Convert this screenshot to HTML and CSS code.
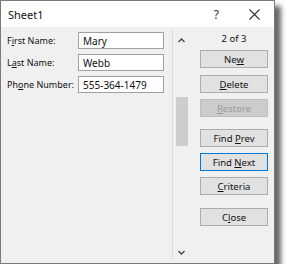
FILE: index.html
```html
<!DOCTYPE html>
<html lang="en">
<head>
  <meta charset="UTF-8" />
  <title>Sheet1</title>
  <link rel="stylesheet" href="styles.css">
</head>
<body>
  <div class="dialog">
    <div class="titlebar">
      <span class="title">Sheet1</span>
      <span class="help">?</span>
      <span class="close-x">
        <svg width="11" height="11" viewBox="0 0 11 11"><path d="M0.5 0.5 L10.5 10.5 M10.5 0.5 L0.5 10.5" stroke="#333" stroke-width="1.1" fill="none"/></svg>
      </span>
    </div>

    <div class="body">
      <div class="fields">
        <div class="row">
          <label>F<u>i</u>rst Name:</label>
          <input type="text" value="Mary" />
        </div>
        <div class="row">
          <label>L<u>a</u>st Name:</label>
          <input type="text" value="Webb" />
        </div>
        <div class="row">
          <label>Ph<u>o</u>ne Number:</label>
          <input type="text" value="555-364-1479" />
        </div>
      </div>

      <div class="scroll">
        <svg class="arrow" width="7" height="5" viewBox="0 0 7 5"><path d="M0.5 4 L3.5 1 L6.5 4" stroke="#444" stroke-width="1.3" fill="none"/></svg>
        <div class="track">
          <div class="thumb"></div>
        </div>
        <svg class="arrow" width="7" height="5" viewBox="0 0 7 5"><path d="M0.5 1 L3.5 4 L6.5 1" stroke="#444" stroke-width="1.3" fill="none"/></svg>
      </div>

      <div class="actions">
        <div class="count">2 of 3</div>
        <button class="first">Ne<u>w</u></button>
        <button><u>D</u>elete</button>
        <button disabled><u>R</u>estore</button>
        <button class="gap">Find <u>P</u>rev</button>
        <button class="focus">Find <u>N</u>ext</button>
        <button><u>C</u>riteria</button>
        <button class="gap last">C<u>l</u>ose</button>
      </div>
    </div>
  </div>
</body>
</html>
```

FILE: styles.css
```css
* {
  box-sizing: border-box;
  margin: 0;
  padding: 0;
}

body {
  background: #fff;
  font-family: 'Noto Sans', sans-serif;
  font-size: 9.5px;
  color: #111;
}

.dialog {
  width: 275px;
  height: 264px;
  background: #f0f0f0;
  border: 1px solid #7a7a7a;
  box-shadow: 6px 6px 5px rgba(0, 0, 0, 0.6);
  display: flex;
  flex-direction: column;
}

.titlebar {
  height: 26px;
  background: #fff;
  display: flex;
  align-items: center;
  padding-left: 7px;
  flex-shrink: 0;
}

.title {
  font-size: 11px;
  flex: 1;
}

.help {
  font-size: 12px;
  color: #333;
  margin-right: 30px;
}

.close-x {
  display: flex;
  margin-right: 14px;
}

.body {
  flex: 1;
  display: flex;
  padding-bottom: 4px;
}

.fields {
  width: 171px;
  padding: 5px 0 0 6px;
}

.row {
  display: flex;
  align-items: center;
  height: 17px;
  margin-bottom: 5px;
}

.row label {
  width: 71px;
  font-size: 9px;
  white-space: nowrap;
}

.row input {
  width: 86px;
  height: 17px;
  border: 1px solid #a0a0a0;
  background: #fff;
  font-family: inherit;
  font-size: 10px;
  padding: 0 4px;
  color: #111;
}

.scroll {
  width: 18px;
  border-left: 1px solid #dcdcdc;
  margin-top: 3px;
  display: flex;
  flex-direction: column;
  align-items: center;
  padding: 8px 0 4px;
}

.track {
  flex: 1;
  width: 100%;
  padding: 54px 2px 0 3px;
}

.thumb {
  height: 49px;
  background: #cdcdcd;
}

.actions {
  flex: 1;
  display: flex;
  flex-direction: column;
  padding: 4px 6px 0 10px;
}

.count {
  text-align: center;
  height: 19px;
  line-height: 16px;
}

button {
  height: 18px;
  margin-bottom: 6px;
  background: #e1e1e1;
  border: 1px solid #adadad;
  font-family: inherit;
  font-size: 9.5px;
  color: #111;
}

button.first {
  margin-bottom: 7px;
}

button:disabled {
  background: #cccccc;
  border-color: #bfbfbf;
  color: #9a9a9a;
}

button.gap {
  margin-top: 6px;
}

button.last {
  margin-top: 7px;
}

button.focus {
  border-color: #0078d7;
}
```
